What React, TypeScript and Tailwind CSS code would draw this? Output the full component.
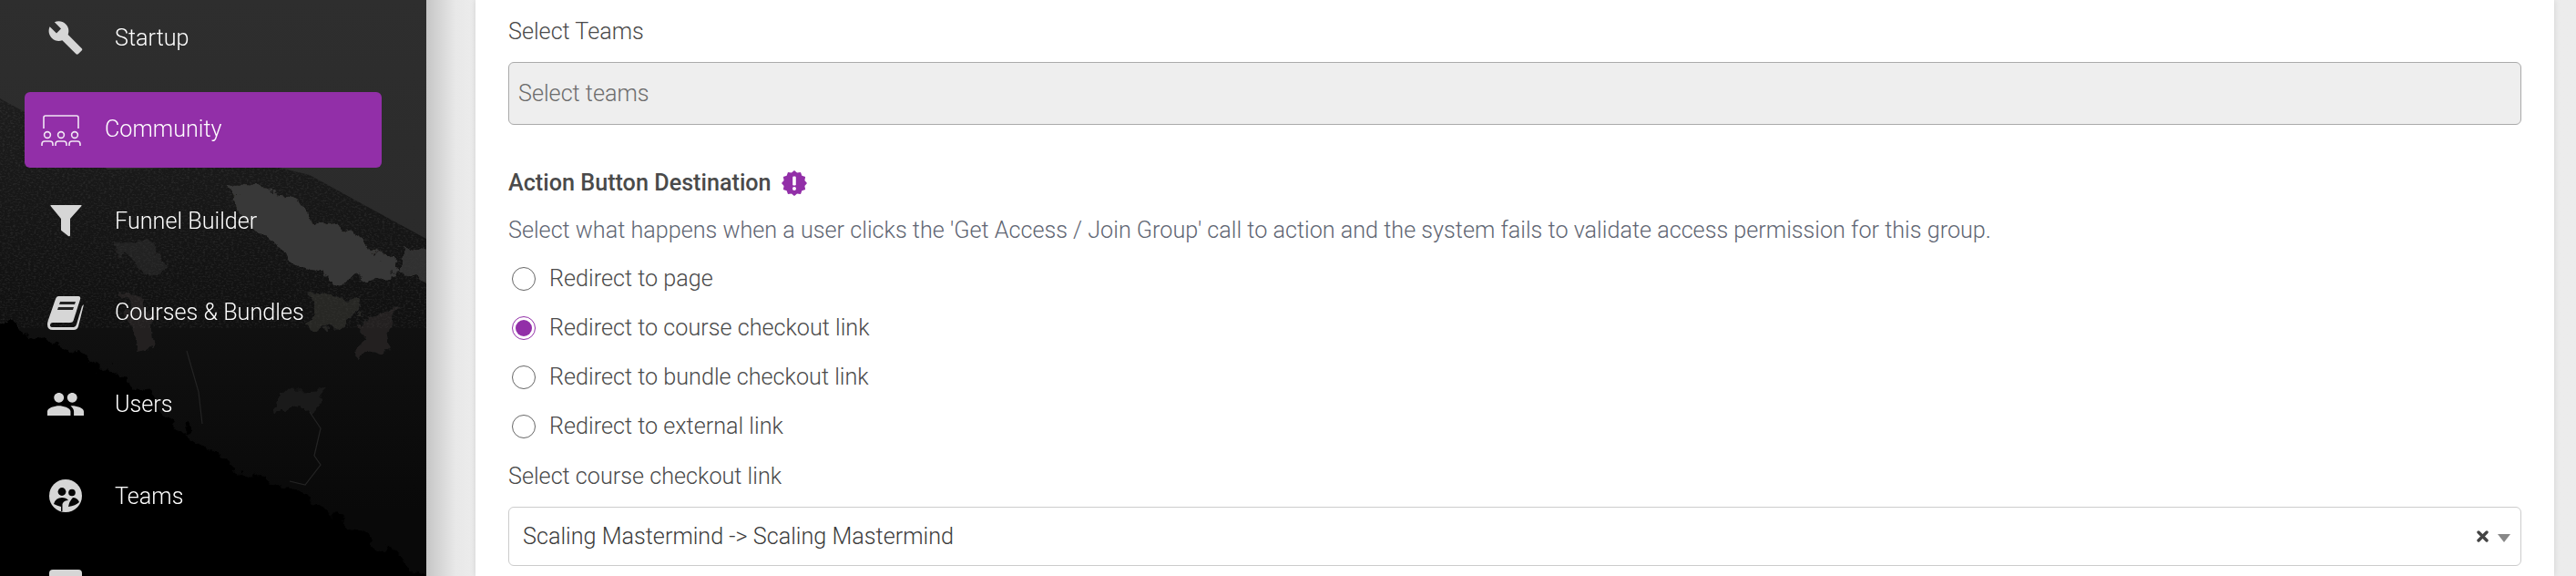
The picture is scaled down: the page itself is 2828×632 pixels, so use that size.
import React from "react";

function Backdrop() {
  return (
    <svg className="absolute inset-0" width="468" height="632" viewBox="0 0 468 632" aria-hidden="true">
      <defs>
        <linearGradient id="sky" x1="0" y1="0" x2="0" y2="1">
          <stop offset="0" stopColor="#2e2e2e" />
          <stop offset="1" stopColor="#262626" />
        </linearGradient>
        <linearGradient id="rock" gradientUnits="userSpaceOnUse" x1="0" y1="110" x2="0" y2="560">
          <stop offset="0" stopColor="#1d1d1d" />
          <stop offset="0.5" stopColor="#111111" />
          <stop offset="1" stopColor="#090909" />
        </linearGradient>
        <filter id="jag" filterUnits="userSpaceOnUse" x="-120" y="0" width="720" height="800">
          <feTurbulence type="fractalNoise" baseFrequency="0.045" numOctaves="4" seed="7" result="n" />
          <feDisplacementMap in="SourceGraphic" in2="n" scale="26" xChannelSelector="R" yChannelSelector="G" />
        </filter>
        <filter id="grain" x="0" y="0" width="100%" height="100%">
          <feTurbulence type="fractalNoise" baseFrequency="0.35 0.6" numOctaves="3" seed="3" />
          <feColorMatrix type="matrix" values="0 0 0 0 1  0 0 0 0 1  0 0 0 0 1  1.6 0 0 0 -0.72" />
        </filter>
        <clipPath id="mountain">
          <path d="M0 108 L40 130 L80 160 L118 186 L200 184 L290 180 L340 192 L400 225 L468 262 L468 360 L0 360 Z" />
        </clipPath>
      </defs>
      <rect width="468" height="632" fill="url(#sky)" />
      <path d="M0 108 L40 130 L80 160 L118 186 L200 184 L290 180 L340 192 L400 225 L468 262 L468 632 L0 632 Z" fill="url(#rock)" />
      <g clipPath="url(#mountain)">
        <rect x="0" y="100" width="468" height="260" filter="url(#grain)" opacity="0.12" />
      </g>
      <g filter="url(#jag)" fill="#393837">
        <path d="M250 205 L300 208 L345 240 L395 262 L440 300 L380 312 L330 292 L300 262 L265 235 Z" />
        <path d="M440 272 L500 290 L500 322 L440 300 Z" opacity="0.8" />
        <path d="M125 268 L165 262 L185 295 L155 305 Z" opacity="0.4" />
        <path d="M135 322 L158 326 L168 385 L150 388 Z" opacity="0.45" />
        <path d="M345 322 L395 330 L380 360 L335 355 Z" opacity="0.55" />
        <path d="M400 345 L440 340 L425 380 L395 395 Z" opacity="0.45" />
        <path d="M305 432 L365 430 L350 445 L300 452 Z" opacity="0.3" />
      </g>
      <path d="M-80 350 L0 355 L43 369 L133 412 L233 499 L333 545 L480 640 L480 780 L-80 780 Z" fill="#050505" filter="url(#jag)" />
      <path d="M340 452 L352 470 L345 500 L352 510 L335 532 L318 528" fill="none" stroke="#242424" strokeWidth="1.2" />
      <path d="M205 385 L218 430 L222 465" fill="none" stroke="#242424" strokeWidth="1.2" />
    </svg>
  );
}

function Wrench() {
  return (
    <svg width="41" height="41" viewBox="0 0 24 24" fill="#d6d6d6">
      <path d="M22.7 19l-9.1-9.1c.9-2.3.4-5-1.5-6.9-2-2-5-2.4-7.4-1.3L9 6 6 9 1.6 4.7C.4 7.1.9 10.1 2.9 12.1c1.9 1.9 4.6 2.4 6.9 1.5l9.1 9.1c.4.4 1 .4 1.4 0l2.3-2.3c.5-.4.5-1.1.1-1.4z" />
    </svg>
  );
}

function Funnel() {
  return (
    <svg width="35" height="35" viewBox="0 0 35 35" fill="#d6d6d6">
      <path d="M1 0 H34 Q35 0 34.5 1 L22 15 V33 Q22 35 20 34 L13 28.5 Q12 28 12 27 V15 L0.5 1 Q0 0 1 0 Z" />
    </svg>
  );
}

function Book() {
  return (
    <svg width="40" height="37" viewBox="0 0 40 37">
      <path d="M12 0 H34 Q37 0 36 3.5 L28.5 27 Q28 29 25 29 H6 Q3 29 3 32 Q3 34 6 34 H29 Q31 34 32 31 L38 11 L40 9 L34 33 Q33 37 29 37 H6 Q0 37 0 31 Q0 29 1 26 L9 3 Q10 0 12 0 Z" fill="#d6d6d6" />
      <path d="M14 6 H31 L30 9 H13 Z M12 12 H29 L28 15 H11 Z" fill="#242424" />
    </svg>
  );
}

function People() {
  return (
    <svg width="40" height="25" viewBox="1 5 22 14" preserveAspectRatio="none" fill="#d6d6d6">
      <path d="M16 11c1.66 0 2.99-1.34 2.99-3S17.66 5 16 5c-1.66 0-3 1.34-3 3s1.34 3 3 3zm-8 0c1.66 0 2.99-1.34 2.99-3S9.66 5 8 5C6.34 5 5 6.34 5 8s1.34 3 3 3zm0 2c-2.33 0-7 1.17-7 3.5V19h14v-2.5c0-2.33-4.67-3.5-7-3.5zm8 0c-.29 0-.62.02-.97.05 1.16.84 1.97 1.97 1.97 3.45V19h6v-2.5c0-2.33-4.67-3.5-7-3.5z" />
    </svg>
  );
}

function Teams() {
  return (
    <svg width="36" height="36" viewBox="0 0 36 36">
      <circle cx="18" cy="18" r="18" fill="#d6d6d6" />
      <circle cx="14" cy="13.5" r="4.4" fill="#060606" />
      <circle cx="25" cy="14.5" r="3.8" fill="#060606" />
      <path d="M5 27 Q7 20 14 20 Q19 20 21 23 Q16 23 14.5 27 V35 H13 V30 Q9 29 5 27 Z" fill="#060606" />
      <path d="M21 30 Q22 24 26 20 Q31 20 33 25 Q29 29 21 30 Z" fill="#060606" />
    </svg>
  );
}

function CommunityIcon() {
  const Person = ({ x }: { x: number }) => (
    <g>
      <circle cx={x} cy="22" r="3.4" />
      <path d={`M${x - 6} 34 V32 Q${x - 6} 29 ${x - 3} 29 H${x + 3} Q${x + 6} 29 ${x + 6} 32 V34`} />
    </g>
  );
  return (
    <svg width="44" height="35" viewBox="0 0 44 35" fill="none" stroke="#f1e6f4" strokeWidth="1.6">
      <path d="M3 15 V3 Q3 1 5 1 H39 Q41 1 41 3 V15" />
      <Person x={7} />
      <Person x={22} />
      <Person x={37} />
    </svg>
  );
}

function Badge() {
  const pts: string[] = [];
  const n = 12;
  for (let i = 0; i < n * 2; i++) {
    const a = (i * Math.PI) / n - Math.PI / 2;
    const r = i % 2 === 0 ? 14 : 11.8;
    pts.push(`${(14 + r * Math.cos(a)).toFixed(2)},${(14 + r * Math.sin(a)).toFixed(2)}`);
  }
  return (
    <svg width="28" height="28" viewBox="0 0 28 28">
      <polygon points={pts.join(" ")} fill="#922fa8" />
      <rect x="12.2" y="6.5" width="3.6" height="10" rx="1.2" fill="#fff" />
      <circle cx="14" cy="20" r="2" fill="#fff" />
    </svg>
  );
}

function NavItem({ icon, label }: { icon: React.ReactNode; label: string }) {
  return (
    <div className="flex h-[83px] items-center text-[25.2px] font-light text-white">
      <div className="ml-[52px] mr-[34px] flex w-[40px] shrink-0 justify-center">{icon}</div>
      <span>{label}</span>
    </div>
  );
}

function Radio({ label, checked }: { label: string; checked?: boolean }) {
  return (
    <div className="flex h-[54px] items-center pl-[4px]">
      <div
        className={
          checked
            ? "flex h-[26px] w-[26px] shrink-0 items-center justify-center rounded-full border border-[#922fa8] bg-white"
            : "flex h-[26px] w-[26px] shrink-0 items-center justify-center rounded-full border border-[#666666] bg-white"
        }
      >
        {checked ? <div className="h-[18px] w-[18px] rounded-full bg-[#922fa8]" /> : null}
      </div>
      <span className="ml-[15px]">{label}</span>
    </div>
  );
}

export default function App() {
  return (
    <div className="flex h-[632px] w-[2828px] overflow-hidden bg-[#ececec] font-['Roboto',sans-serif]">
      <aside className="relative z-10 h-[632px] w-[468px] shrink-0 overflow-hidden">
        <Backdrop />
        <nav className="relative flex flex-col gap-[17.6px]">
          <NavItem icon={<Wrench />} label="Startup" />
          <div className="ml-[27px] flex h-[83px] w-[392px] items-center rounded-[6px] bg-[#922fa8] text-[25.2px] font-light text-white">
            <div className="ml-[18px] mt-[2px] flex w-[44px] shrink-0 justify-center">
              <CommunityIcon />
            </div>
            <span className="ml-[26px]">Community</span>
          </div>
          <NavItem icon={<Funnel />} label="Funnel Builder" />
          <NavItem icon={<Book />} label="Courses &amp; Bundles" />
          <NavItem icon={<People />} label="Users" />
          <NavItem icon={<Teams />} label="Teams" />
          <NavItem
            icon={<div className="h-[40px] w-[36px] rounded-t-[4px] bg-[#d6d6d6]" />}
            label=""
          />
        </nav>
      </aside>
      <main className="flex h-[632px] min-w-0 flex-1 bg-gradient-to-r from-[#c6c6c6] from-[0px] via-[#e8e8e8] via-[32px] to-[#ececec] to-[52px] pr-[24px] pl-[54px]">
        <section className="h-[632px] w-[2282px] bg-white px-[36px] text-[25.2px] font-light text-[#4a4a4a] shadow-[0_0_6px_rgba(0,0,0,0.12)]">
          <div className="flex h-[68px] items-center pt-[2px]">Select Teams</div>
          <div className="flex h-[69px] items-center rounded-[6px] border border-[#aaaaaa] bg-[#eeeeee] px-[10px] text-[#6c6c6c]">
            Select teams
          </div>
          <div className="mt-[44px] flex h-[40px] items-center gap-[11px] font-medium">
            <span>Action Button Destination</span>
            <Badge />
          </div>
          <div className="mt-[12px] flex h-[40px] items-center text-[#5f6673]">
            Select what happens when a user clicks the 'Get Access / Join Group' call to action and the system fails to validate access permission for this group.
          </div>
          <div className="mt-[6px] flex flex-col">
            <Radio label="Redirect to page" />
            <Radio label="Redirect to course checkout link" checked />
            <Radio label="Redirect to bundle checkout link" />
            <Radio label="Redirect to external link" />
          </div>
          <div className="mt-[8px] flex h-[40px] items-center">Select course checkout link</div>
          <div className="mt-[13px] flex h-[65px] items-center justify-between rounded-[6px] border border-[#cccccc] bg-white pr-[11px] pl-[15px] text-[#3c3c3c]">
            <span>Scaling Mastermind -&gt; Scaling Mastermind</span>
            <div className="flex items-center gap-[10px]">
              <svg width="13" height="13" viewBox="0 0 13 13" stroke="#444444" strokeWidth="3.4" strokeLinecap="round">
                <path d="M2 2 L11 11 M11 2 L2 11" />
              </svg>
              <svg width="14" height="9" viewBox="0 0 14 9" fill="#888888" className="mt-[4px]">
                <path d="M0 0 H14 L7 9 Z" />
              </svg>
            </div>
          </div>
        </section>
      </main>
    </div>
  );
}
